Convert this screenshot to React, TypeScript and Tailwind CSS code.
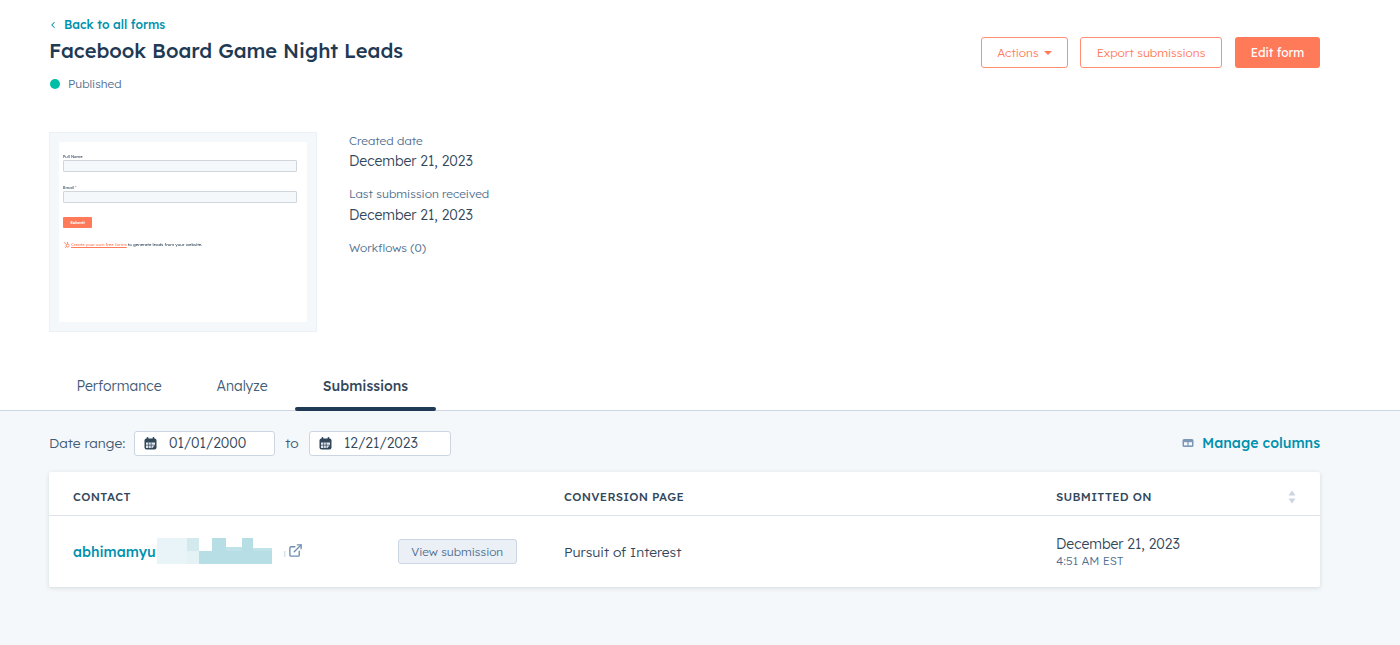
import { ChevronLeft, ExternalLink } from "lucide-react";

const font = { fontFamily: '"Lexend Deca", Inter, "Noto Sans", sans-serif' };

function Redaction() {
  return (
    <svg width="130" height="27" viewBox="0 0 130 27" className="shrink-0">
      <rect x="1" y="0" width="30" height="26" fill="#e8f4f7" />
      <rect x="31" y="0" width="12" height="13" fill="#d2e9ee" />
      <rect x="31" y="13" width="12" height="13" fill="#e4f2f5" />
      <rect x="43" y="13" width="73" height="13" fill="#b7dee5" />
      <rect x="56" y="0" width="14" height="13" fill="#b7dee5" />
      <rect x="70" y="9" width="16" height="4" fill="#bfe2e8" />
      <rect x="86" y="0" width="11" height="13" fill="#b7dee5" />
      <rect x="97" y="10" width="19" height="3" fill="#c0e3e9" />
      <rect x="128" y="13" width="1.5" height="6" fill="#d5e6ec" />
    </svg>
  );
}

function CalendarIcon() {
  return (
    <svg width="13" height="13" viewBox="0 0 13 13" className="shrink-0">
      <rect x="0.5" y="1.5" width="12" height="11" rx="2" fill="#33475b" />
      <rect x="2.6" y="0" width="1.8" height="3" rx="0.9" fill="#33475b" />
      <rect x="8.6" y="0" width="1.8" height="3" rx="0.9" fill="#33475b" />
      <path d="M2 5.5h9v2.6l-2.6 3H2z" fill="#dfe5ec" />
      <path d="M4.6 5.5v5.6M7.2 5.5v5.6M2 8.2h9" stroke="#33475b" strokeWidth="0.7" />
    </svg>
  );
}

function FormPreview() {
  return (
    <div className="w-[268px] h-[200px] shrink-0 bg-[#f5f8fa] border border-[#eaf0f6] p-[9px]">
      <div className="h-full bg-white pl-[4px] pt-[12px] text-[#33475b] blur-[0.3px]">
        <div className="text-[4px] leading-[6px]">Full Name</div>
        <div className="h-[12px] mr-[10px] bg-[#f5f8fa] border border-[#d0d6dc] rounded-[1px]" />
        <div className="text-[4px] leading-[6px] mt-[13px]">
          Email <span className="text-[#f2545b]">*</span>
        </div>
        <div className="h-[12px] mr-[10px] bg-[#f5f8fa] border border-[#d0d6dc] rounded-[1px]" />
        <div className="mt-[14px] w-[29px] h-[11px] bg-[#ff7a59] rounded-[1px] text-white text-[4px] font-bold flex items-center justify-center">
          Submit
        </div>
        <div className="mt-[13px] flex items-center gap-[1px] text-[4.2px] leading-[6px]">
          <svg width="7" height="7" viewBox="0 0 7 7" fill="none" stroke="#ff7a59" strokeWidth="0.9">
            <circle cx="4.6" cy="4.6" r="1.5" />
            <path d="M4.6 3V1M3.4 3.6 1 1.2M3.4 5.8 2.2 6.6" />
          </svg>
          <span className="text-[#ff7a59] underline">Create your own free forms</span>
          <span>to generate leads from your website.</span>
        </div>
      </div>
    </div>
  );
}

function DateInput({ value, width }: { value: string; width: string }) {
  return (
    <div className={`${width} h-[25px] bg-white border border-[#cbd6e2] rounded-[3px] flex items-center pl-[9px] gap-[12px]`}>
      <CalendarIcon />
      <span className="text-[13.9px] text-[#33475b] font-light">{value}</span>
    </div>
  );
}

export default function App() {
  return (
    <div className="w-[1400px] h-[645px] overflow-hidden bg-white flex flex-col text-[#33475b]" style={font}>
      <div className="h-[132px] shrink-0 px-[49px] pt-[16px] flex justify-between">
        <div>
          <div className="flex items-center gap-[5px] text-[12.1px] font-medium text-[#0091ae] leading-[17px] -ml-[1px]">
            <ChevronLeft size={10} strokeWidth={2.5} />
            <span className="ml-[1px]">Back to all forms</span>
          </div>
          <h1 className="mt-[4px] text-[20.1px] leading-[28px] font-medium text-[#1f3a54]">Facebook Board Game Night Leads</h1>
          <div className="mt-[10px] flex items-center gap-[8px] leading-[18px] ml-[1px]">
            <span className="w-[10px] h-[10px] rounded-full bg-[#00bda5]" />
            <span className="text-[11.8px] text-[#516f90] font-light">Published</span>
          </div>
        </div>
        <div className="pt-[21px] mr-[31px] flex items-start text-[11.9px] font-light">
          <button className="w-[87px] h-[31px] border border-[#ff8f73] rounded-[3px] text-[#ff7a59] flex items-center justify-center gap-[5px]">
            Actions
            <span className="w-0 h-0 border-l-[4px] border-r-[4px] border-t-[4px] border-l-transparent border-r-transparent border-t-[#ff7a59]" />
          </button>
          <button className="ml-[12px] w-[142px] h-[31px] border border-[#ff8f73] rounded-[3px] text-[#ff7a59]">Export submissions</button>
          <button className="ml-[13px] w-[85px] h-[31px] bg-[#ff7a59] rounded-[3px] text-white font-normal">Edit form</button>
        </div>
      </div>

      <div className="h-[200px] shrink-0 pl-[49px] flex gap-[32px]">
        <FormPreview />
        <div className="font-light">
          <div className="text-[11.9px] text-[#516f90] leading-[18px]">Created date</div>
          <div className="mt-[1px] text-[13.9px] text-[#33475b] leading-[20px]">December 21, 2023</div>
          <div className="mt-[14px] text-[11.9px] text-[#516f90] leading-[18px]">Last submission received</div>
          <div className="mt-[2px] text-[13.9px] text-[#33475b] leading-[20px]">December 21, 2023</div>
          <div className="mt-[14px] text-[11.9px] text-[#516f90] leading-[18px]">Workflows (0)</div>
        </div>
      </div>

      <div className="h-[79px] shrink-0 flex items-end pl-[49px] border-b border-[#cbd6e2]">
        <div className="flex h-[53px] -mb-[1px] text-[14px]">
          <div className="w-[140px] pt-[18px] text-center leading-[20px] text-[#425b76] font-light">Performance</div>
          <div className="w-[106px] pt-[18px] text-center leading-[20px] text-[#425b76] font-light">Analyze</div>
          <div className="w-[141px] pt-[18px] text-center leading-[20px] font-medium text-[#33475b] relative">
            Submissions
            <span className="absolute left-0 right-0 bottom-0 h-[4px] rounded-full bg-[#1f3a54]" />
          </div>
        </div>
      </div>

      <div className="flex-1 bg-[#f5f8fa] px-[49px] pr-[80px] pt-[20px]">
        <div className="flex items-center justify-between h-[25px]">
          <div className="flex items-center text-[13.8px] text-[#425b76] font-light">
            <span className="w-[85px]">Date range:</span>
            <DateInput value="01/01/2000" width="w-[141px]" />
            <span className="w-[34px] text-center">to</span>
            <DateInput value="12/21/2023" width="w-[142px]" />
          </div>
          <div className="flex items-center gap-[8px] text-[14.1px] font-medium text-[#0091ae]">
            <svg width="12" height="10" viewBox="0 0 12 10" fill="none">
              <rect x="0.5" y="1" width="11" height="8" rx="1.5" fill="#7c98b6" />
              <rect x="2" y="4.2" width="3.4" height="3.2" fill="#f5f8fa" />
              <rect x="6.6" y="4.2" width="3.4" height="3.2" fill="#f5f8fa" />
            </svg>
            Manage columns
          </div>
        </div>

        <div className="mt-[16px] h-[115px] bg-white rounded-[2px] shadow-[0_1px_4px_rgba(45,62,80,0.16)]">
          <div className="h-[44px] flex items-center border-b border-[#dfe3eb] text-[11.6px] font-medium text-[#33475b] tracking-[0.3px] pr-[24px] pt-[6px]">
            <span className="w-[515px] pl-[24px]">CONTACT</span>
            <span className="w-[492px]">CONVERSION PAGE</span>
            <span className="flex-1">SUBMITTED ON</span>
            <svg width="8" height="14" viewBox="0 0 8 14" fill="#cbd6e2">
              <path d="M4 0.5 7.5 5.5H0.5Z" />
              <path d="M4 13.5 0.5 8.5H7.5Z" />
            </svg>
          </div>
          <div className="h-[71px] flex items-center">
            <div className="w-[515px] pl-[24px] flex items-center">
              <span className="text-[14px] font-medium text-[#0091ae] pt-[1px]">abhimamyu</span>
              <Redaction />
              <ExternalLink size={15} strokeWidth={2.2} className="text-[#6f8eb0] ml-[2px] -mt-[2px]" />
              <button className="ml-[95px] w-[119px] h-[25px] bg-[#eaf0f6] border border-[#cbd6e2] rounded-[3px] text-[11.8px] text-[#506e91] font-light">
                View submission
              </button>
            </div>
            <span className="w-[492px] text-[13.8px] text-[#33475b] font-light pt-[1px]">Pursuit of Interest</span>
            <div className="font-light">
              <div className="text-[13.9px] leading-[18px] text-[#33475b]">December 21, 2023</div>
              <div className="text-[11.8px] leading-[16px] text-[#516f90]">4:51 AM EST</div>
            </div>
          </div>
        </div>
      </div>
    </div>
  );
}
